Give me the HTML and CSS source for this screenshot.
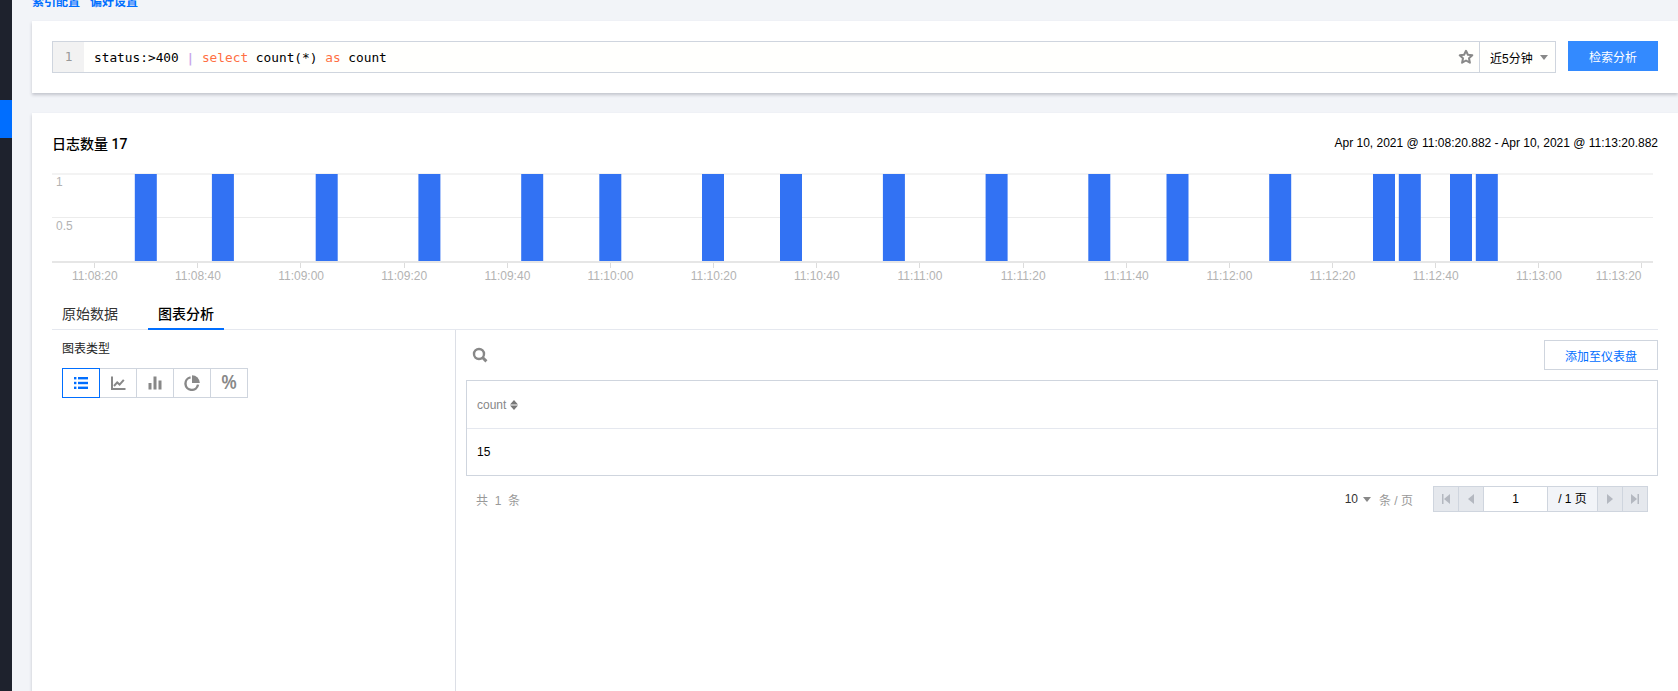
FILE: index.html
```html
<!DOCTYPE html>
<html lang="zh-CN">
<head>
    <meta charset="UTF-8">
    <title>日志检索</title>
    <link rel="stylesheet" href="styles.css">
</head>
<body>
    <aside class="sidebar"><div class="sidebar-active"></div></aside>
    <main class="main">
        <div class="top-links">
            <a class="top-link">索引配置</a>
            <a class="top-link">偏好设置</a>
        </div>

        <section class="card search-card">
            <div class="query-box">
                <div class="gutter">1</div>
                <div class="code">status:&gt;400 <span class="pipe">|</span> <span class="kw">select</span> count(*) <span class="kw">as</span> count</div>
                <svg class="star" viewBox="0 0 16 16" width="16" height="16"><path d="M8 1.8l1.9 4 4.4.5-3.3 3 .9 4.4L8 11.5l-3.9 2.2.9-4.4-3.3-3 4.4-.5z" fill="none" stroke="#888" stroke-width="2" stroke-linejoin="round"/></svg>
                <div class="range">近5分钟<span class="caret"></span></div>
            </div>
            <button class="search-btn">检索分析</button>
        </section>

        <section class="card result-card">
            <div class="result-head">
                <h2 class="result-title">日志数量 17</h2>
                <div class="result-time">Apr 10, 2021 @ 11:08:20.882 - Apr 10, 2021 @ 11:13:20.882</div>
            </div>

            <svg class="histogram" width="1606" height="129" viewBox="0 0 1606 129">
                <rect x="0" y="2" width="1601" height="2" fill="#f3f3f3"/>
                <rect x="0" y="46" width="1601" height="1" fill="#ececec"/>
                <g fill="#3272f3">
                    <rect x="82.8" y="3" width="22" height="88"/>
                    <rect x="159.9" y="3" width="22" height="88"/>
                    <rect x="263.7" y="3" width="22" height="88"/>
                    <rect x="366.4" y="3" width="22" height="88"/>
                    <rect x="469.2" y="3" width="22" height="88"/>
                    <rect x="547.3" y="3" width="22" height="88"/>
                    <rect x="650" y="3" width="22" height="88"/>
                    <rect x="728" y="3" width="22" height="88"/>
                    <rect x="830.9" y="3" width="22" height="88"/>
                    <rect x="933.6" y="3" width="22" height="88"/>
                    <rect x="1036.3" y="3" width="22" height="88"/>
                    <rect x="1114.5" y="3" width="22" height="88"/>
                    <rect x="1217.2" y="3" width="22" height="88"/>
                    <rect x="1321" y="3" width="22" height="88"/>
                    <rect x="1346.8" y="3" width="22" height="88"/>
                    <rect x="1398" y="3" width="22" height="88"/>
                    <rect x="1423.8" y="3" width="22" height="88"/>
                </g>
                <rect x="0" y="90" width="1601" height="2" fill="#e6e6e6"/>
                <g fill="#dcdcdc">
                    <rect x="42" y="92" width="1" height="5"/>
                    <rect x="145" y="92" width="1" height="5"/>
                    <rect x="248" y="92" width="1" height="5"/>
                    <rect x="352" y="92" width="1" height="5"/>
                    <rect x="455" y="92" width="1" height="5"/>
                    <rect x="558" y="92" width="1" height="5"/>
                    <rect x="661" y="92" width="1" height="5"/>
                    <rect x="764" y="92" width="1" height="5"/>
                    <rect x="867" y="92" width="1" height="5"/>
                    <rect x="971" y="92" width="1" height="5"/>
                    <rect x="1074" y="92" width="1" height="5"/>
                    <rect x="1177" y="92" width="1" height="5"/>
                    <rect x="1280" y="92" width="1" height="5"/>
                    <rect x="1383" y="92" width="1" height="5"/>
                    <rect x="1486" y="92" width="1" height="5"/>
                    <rect x="1589" y="92" width="1" height="5"/>
                </g>
                <g class="axis-text">
                    <text x="4" y="15">1</text>
                    <text x="4" y="59">0.5</text>
                </g>
                <g class="axis-text axis-x">
                    <text x="42.8" y="109">11:08:20</text>
                    <text x="145.9" y="109">11:08:40</text>
                    <text x="249.1" y="109">11:09:00</text>
                    <text x="352.2" y="109">11:09:20</text>
                    <text x="455.4" y="109">11:09:40</text>
                    <text x="558.5" y="109">11:10:00</text>
                    <text x="661.7" y="109">11:10:20</text>
                    <text x="764.8" y="109">11:10:40</text>
                    <text x="868" y="109">11:11:00</text>
                    <text x="971.1" y="109">11:11:20</text>
                    <text x="1074.3" y="109">11:11:40</text>
                    <text x="1177.4" y="109">11:12:00</text>
                    <text x="1280.5" y="109">11:12:20</text>
                    <text x="1383.7" y="109">11:12:40</text>
                    <text x="1486.9" y="109">11:13:00</text>
                    <text x="1589.5" y="109" text-anchor="end">11:13:20</text>
                </g>
            </svg>

            <div class="tabs">
                <div class="tab">原始数据</div>
                <div class="tab active">图表分析</div>
            </div>

            <div class="panels">
                <div class="chart-types">
                    <div class="chart-types-label">图表类型</div>
                    <div class="type-group">
                        <div class="type-btn active">
                            <svg viewBox="0 0 16 16" width="16" height="16" fill="#006eff"><rect x="1" y="2" width="2.4" height="2.4"/><rect x="1" y="6.8" width="2.4" height="2.4"/><rect x="1" y="11.6" width="2.4" height="2.4"/><rect x="5" y="2" width="10" height="2.4"/><rect x="5" y="6.8" width="10" height="2.4"/><rect x="5" y="11.6" width="10" height="2.4"/></svg>
                        </div>
                        <div class="type-btn">
                            <svg viewBox="0 0 16 16" width="16" height="16" fill="none" stroke="#888" stroke-width="2"><path d="M2 1.5v12.5h13.5"/><path d="M4 11l3.2-3.6 2.4 2.2 4.2-4.8"/></svg>
                        </div>
                        <div class="type-btn">
                            <svg viewBox="0 0 16 16" width="16" height="16" fill="#888"><rect x="1.5" y="8" width="3" height="6.5"/><rect x="6.5" y="1.5" width="3" height="13"/><rect x="11.5" y="5.5" width="3" height="9"/></svg>
                        </div>
                        <div class="type-btn">
                            <svg viewBox="0 0 16 16" width="16" height="16"><path d="M6.6 2.4A6.3 6.3 0 1 0 14 9.6" fill="none" stroke="#888" stroke-width="2.4"/><path d="M8 0.2A7.8 7.8 0 0 1 15.8 8H8z" fill="#888"/></svg>
                        </div>
                        <div class="type-btn">
                            <span class="percent">%</span>
                        </div>
                    </div>
                </div>

                <div class="table-panel">
                    <div class="table-tools">
                        <svg viewBox="0 0 16 16" width="16" height="16" fill="none" stroke="#888"><circle cx="7" cy="7" r="5" stroke-width="2.4"/><path d="M10.8 10.8l3.6 3.6" stroke-width="3"/></svg>
                        <button class="add-btn">添加至仪表盘</button>
                    </div>
                    <div class="result-table">
                        <div class="table-th">count
                            <svg viewBox="0 0 8 10" width="8" height="10" fill="#777"><path d="M4 0l4 4.4H0zM4 10l4-4.4H0z"/></svg>
                        </div>
                        <div class="table-td">15</div>
                    </div>
                    <div class="pager-row">
                        <div class="total">共 &nbsp;1&nbsp; 条</div>
                        <div class="page-size"><span class="size-num">10</span><span class="caret dark"></span><span class="size-unit">条 / 页</span></div>
                        <div class="pager">
                            <div class="page-btn"><svg viewBox="0 0 8 10" width="8" height="10" fill="#b4b8c0"><rect x="0" y="0" width="1.5" height="10"/><path d="M8 0v10L2 5z"/></svg></div>
                            <div class="page-btn"><svg viewBox="0 0 8 10" width="8" height="10" fill="#b4b8c0"><path d="M7 0v10L1 5z"/></svg></div>
                            <div class="page-input">1</div>
                            <div class="page-total">/ 1 页</div>
                            <div class="page-btn"><svg viewBox="0 0 8 10" width="8" height="10" fill="#b4b8c0"><path d="M1 0v10l6-5z"/></svg></div>
                            <div class="page-btn last"><svg viewBox="0 0 8 10" width="8" height="10" fill="#b4b8c0"><path d="M0 0v10l6-5z"/><rect x="6.5" y="0" width="1.5" height="10"/></svg></div>
                        </div>
                    </div>
                </div>
            </div>
        </section>
    </main>
</body>
</html>
```

FILE: styles.css
```css
* {
    box-sizing: border-box;
}

html, body {
    height: 100%;
}

body {
    margin: 0;
    display: flex;
    overflow: hidden;
    background-color: #f2f4f8;
    color: #000;
    font-family: "Liberation Sans", "Noto Sans CJK SC", sans-serif;
    font-size: 12px;
}

.sidebar {
    width: 12px;
    flex: none;
    padding-top: 100px;
    background-color: #1e222d;
}

.sidebar-active {
    height: 38px;
    background-color: #006eff;
}

.main {
    flex: 1;
    min-width: 0;
    display: flex;
    flex-direction: column;
    padding-left: 20px;
}

.top-links {
    height: 21px;
    flex: none;
    display: flex;
    gap: 10px;
    overflow: hidden;
}

.top-link {
    color: #006eff;
    line-height: 12px;
    margin-top: -4px;
    font-weight: 700;
}

.card {
    background-color: #fff;
    box-shadow: 0 2px 3px rgba(54, 58, 80, 0.25);
}

.search-card {
    height: 72px;
    flex: none;
    display: flex;
    align-items: flex-start;
    padding: 20px 20px 0;
    gap: 12px;
}

.query-box {
    flex: 1;
    height: 32px;
    display: flex;
    align-items: center;
    border: 1px solid #cfd5de;
    background-color: #fffffd;
}

.gutter {
    width: 31px;
    height: 100%;
    text-align: center;
    line-height: 30px;
    font-family: "DejaVu Sans Mono", monospace;
    font-size: 12.8px;
    color: #999;
    background-color: #f2f2f2;
}

.code {
    flex: 1;
    padding-left: 10px;
    font-family: "DejaVu Sans Mono", monospace;
    font-size: 12.8px;
    white-space: pre;
}

.kw {
    color: #ff7043;
}

.pipe {
    color: #c9a6ea;
    font-weight: 700;
}

.star {
    margin-right: 5px;
}

.range {
    width: 76px;
    height: 100%;
    display: flex;
    align-items: center;
    padding-left: 10px;
    border-left: 1px solid #cfd5de;
}

.caret {
    display: inline-block;
    margin-left: 7px;
    border-left: 4px solid transparent;
    border-right: 4px solid transparent;
    border-top: 5px solid #888;
}

.search-btn {
    width: 90px;
    height: 30px;
    border: none;
    background-color: #338aff;
    color: #fff;
    font-family: inherit;
    font-size: 12px;
}

.result-card {
    flex: 1;
    margin-top: 20px;
    padding: 0 20px;
    display: flex;
    flex-direction: column;
    min-height: 0;
}

.result-head {
    height: 58px;
    flex: none;
    display: flex;
    justify-content: space-between;
    align-items: center;
    padding-top: 2px;
}

.result-title {
    margin: 0;
    font-family: Roboto, "Noto Sans CJK SC", sans-serif;
    font-size: 14px;
    font-weight: 500;
}

.histogram {
    display: block;
    flex: none;
}

.axis-text {
    fill: #b3b3b3;
    font-size: 12px;
}

.axis-x {
    text-anchor: middle;
}

.tabs {
    height: 30px;
    flex: none;
    display: flex;
    padding-left: 10px;
    border-bottom: 1px solid #e5e8ef;
}

.tab {
    margin-right: 20px;
    padding: 0;
    width: 56px;
    line-height: 29px;
    font-size: 14px;
    color: #333;
}

.tab.active {
    width: 76px;
    height: 30px;
    margin-left: 10px;
    text-align: center;
    color: #000;
    font-weight: 500;
    border-bottom: 2px solid #006eff;
}

.panels {
    flex: 1;
    display: flex;
    min-height: 0;
}

.chart-types {
    width: 404px;
    flex: none;
    padding: 10px 0 0 10px;
    border-right: 1px solid #dcdfe6;
}

.chart-types-label {
    line-height: 18px;
    color: #222;
}

.type-group {
    display: flex;
    margin-top: 10px;
}

.type-btn {
    width: 38px;
    height: 30px;
    margin-left: -1px;
    display: flex;
    align-items: center;
    justify-content: center;
    border: 1px solid #cfd5de;
}

.type-btn:first-child {
    margin-left: 0;
}

.type-btn.active {
    position: relative;
    border-color: #006eff;
}

.percent {
    font-size: 17px;
    font-weight: 700;
    color: #888;
    transform: scaleY(1.2);
}

.table-panel {
    flex: 1;
    min-width: 0;
    padding: 10px 0 0 10px;
}

.table-tools {
    height: 30px;
    display: flex;
    align-items: center;
    justify-content: space-between;
    padding-left: 6px;
}

.add-btn {
    width: 114px;
    height: 30px;
    border: 1px solid #cfd5de;
    background-color: #fff;
    color: #006eff;
    font-family: inherit;
    font-size: 12px;
}

.result-table {
    margin-top: 10px;
    border: 1px solid #cfd5de;
}

.table-th {
    height: 48px;
    display: flex;
    align-items: center;
    gap: 4px;
    padding-left: 10px;
    color: #888;
    border-bottom: 1px solid #e5e8ef;
}

.table-td {
    height: 46px;
    padding-left: 10px;
    line-height: 46px;
}

.pager-row {
    display: flex;
    align-items: center;
    margin-top: 10px;
    padding: 0 10px;
}

.total {
    flex: 1;
    color: #999;
}

.page-size {
    display: flex;
    align-items: center;
    margin-right: 20px;
}

.size-num {
    color: #333;
}

.caret.dark {
    margin-left: 5px;
}

.size-unit {
    margin-left: 8px;
    color: #999;
}

.pager {
    display: flex;
    height: 26px;
    border: 1px solid #cfd5de;
    background-color: #f2f4f8;
}

.page-btn {
    width: 25px;
    display: flex;
    align-items: center;
    justify-content: center;
    background-color: #e5e8ed;
    border-right: 1px solid #cfd5de;
}

.page-btn.last {
    width: 24px;
    border-right: none;
}

.page-input {
    width: 64px;
    line-height: 24px;
    text-align: center;
    background-color: #fff;
    border-right: 1px solid #cfd5de;
}

.page-total {
    width: 50px;
    line-height: 24px;
    text-align: center;
    border-right: 1px solid #cfd5de;
}
```
